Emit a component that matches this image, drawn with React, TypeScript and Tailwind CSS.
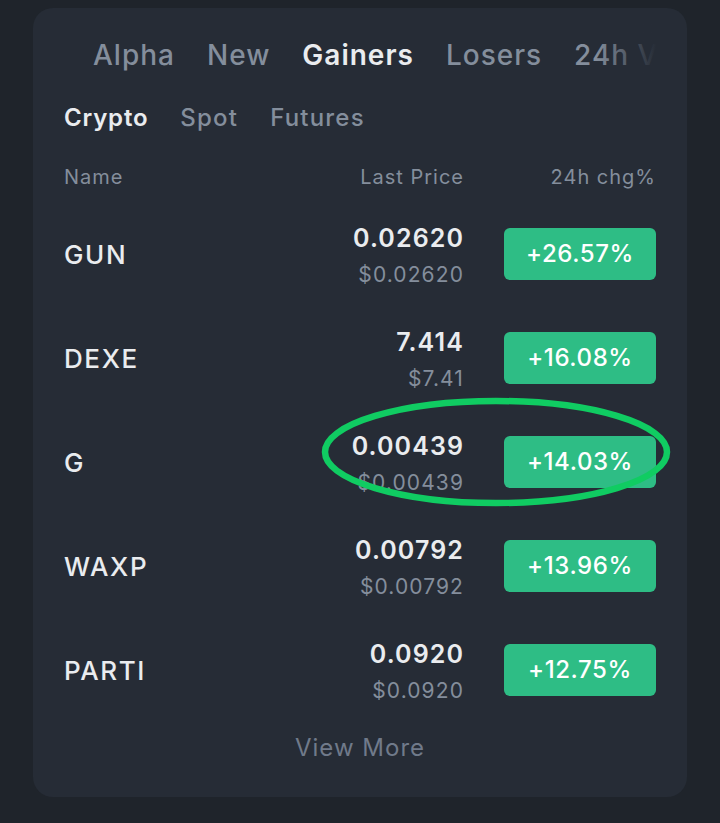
import React from "react";

type Row = { name: string; price: string; usd: string; chg: string };

const rows: Row[] = [
  { name: "GUN", price: "0.02620", usd: "$0.02620", chg: "+26.57%" },
  { name: "DEXE", price: "7.414", usd: "$7.41", chg: "+16.08%" },
  { name: "G", price: "0.00439", usd: "$0.00439", chg: "+14.03%" },
  { name: "WAXP", price: "0.00792", usd: "$0.00792", chg: "+13.96%" },
  { name: "PARTI", price: "0.0920", usd: "$0.0920", chg: "+12.75%" },
];

const tabs = ["Alpha", "New", "Gainers", "Losers", "24h Vol"];

const App: React.FC = () => {
  return (
    <div
      className="relative min-h-[823px] w-[720px] bg-[#1f242b] px-[33px] pt-[8px]"
      style={{ fontFamily: "Inter, 'Noto Sans', sans-serif" }}
    >
      <div className="flex flex-col rounded-[20px] bg-[#262c36] px-[31px] pt-[15px] pb-[23px]">
        {/* top tabs */}
        <div className="relative h-[64px] overflow-hidden">
          <div className="flex h-full items-center gap-[32px] whitespace-nowrap pl-[29px] text-[28px] font-medium tracking-[1px] text-[#848e9c]">
            {tabs.map((t) => (
              <span key={t} className={t === "Gainers" ? "font-semibold text-[#eaecef]" : ""}>
                {t}
              </span>
            ))}
          </div>
          <div className="absolute top-0 right-0 h-full w-[60px] bg-gradient-to-r from-transparent to-[#262c36]" />
        </div>

        {/* sub tabs */}
        <div className="mt-[11px] flex h-[40px] items-center gap-[32px] text-[24px] font-medium tracking-[1.2px] text-[#848e9c]">
          <span className="font-semibold tracking-[0.8px] text-[#eaecef]">Crypto</span>
          <span>Spot</span>
          <span>Futures</span>
        </div>

        {/* header */}
        <div className="mt-[19px] flex h-[40px] items-center text-[20px] tracking-[1px] text-[#848e9c]">
          <span>Name</span>
          <span className="ml-auto">Last Price</span>
          <span className="w-[192px] text-right">24h chg%</span>
        </div>

        {/* rows */}
        <div className="mt-[5px] flex flex-col">
          {rows.map((r) => (
            <div key={r.name} className="flex h-[104px] items-center">
              <span className="text-[26px] font-medium tracking-[1.6px] text-[#eaecef]">{r.name}</span>
              <div className="mt-[5px] ml-auto flex flex-col items-end">
                <span className="h-[36px] text-[25px] leading-[36px] font-semibold tracking-[1.1px] text-[#eaecef]">
                  {r.price}
                </span>
                <span className="h-[37px] text-[21px] leading-[37px] tracking-[1.1px] text-[#848e9c]">{r.usd}</span>
              </div>
              <div className="ml-[40px] flex h-[52px] w-[152px] items-center justify-center rounded-[6px] bg-[#2ebd85] text-[24px] font-medium tracking-[0.6px] text-white">
                {r.chg}
              </div>
            </div>
          ))}
        </div>

        {/* view more */}
        <div className="flex h-[52px] items-center justify-center text-[24px] tracking-[1px] text-[#707a8a]">
          View More
        </div>
      </div>

      {/* highlight annotation */}
      <svg className="pointer-events-none absolute top-0 left-0" width="720" height="823">
        <ellipse cx="496" cy="452" rx="171" ry="51" fill="none" stroke="#10cc62" strokeWidth="6.5" />
      </svg>
    </div>
  );
};

export default App;
